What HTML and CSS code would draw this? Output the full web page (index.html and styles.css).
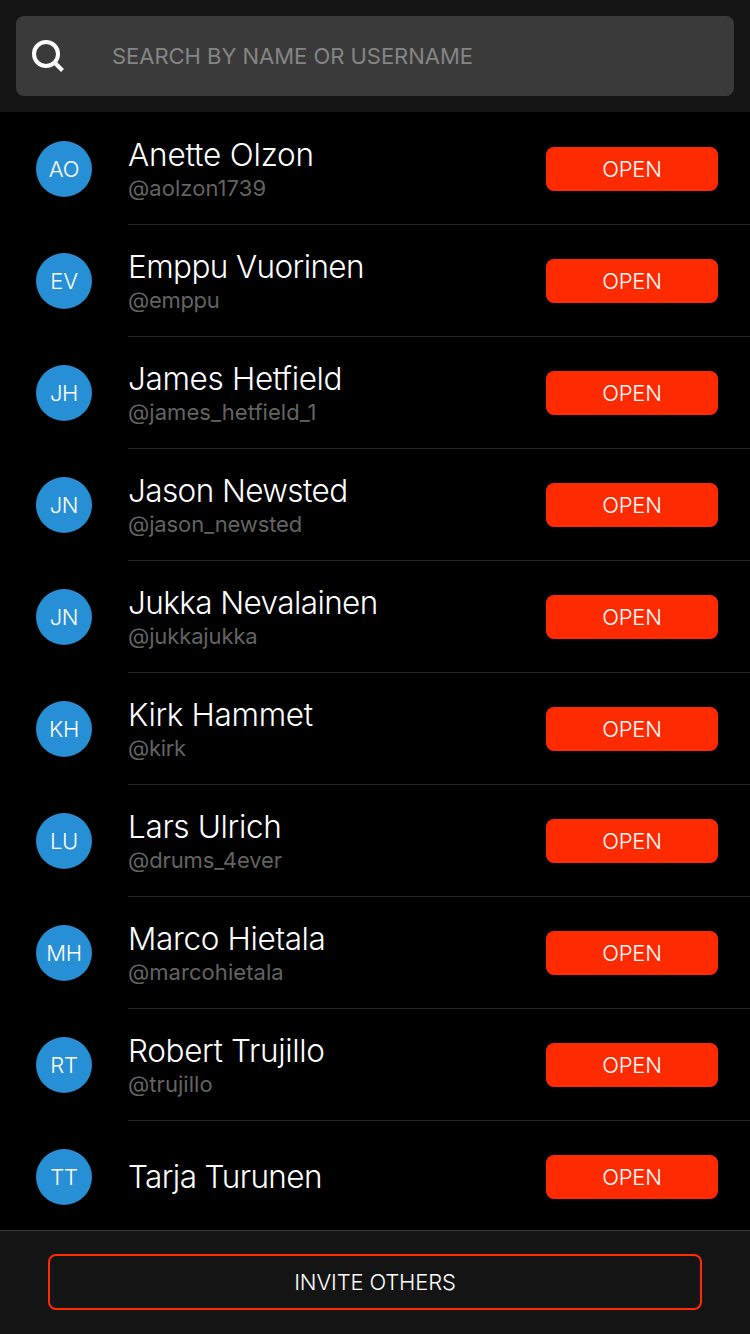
FILE: index.html
```html
<!DOCTYPE html>
<html lang="en">
<head>
<meta charset="utf-8">
<title>Contacts</title>
<link rel="stylesheet" href="styles.css">
</head>
<body>
<div class="screen">
  <header class="header">
    <div class="search">
      <svg class="search-icon" viewBox="0 0 32 32" fill="none" stroke="#fff" stroke-width="4"><circle cx="14" cy="14" r="12"/><path d="M22.5 22.5 30.5 30.5"/></svg>
      <span class="search-hint">SEARCH BY NAME OR USERNAME</span>
    </div>
  </header>
  <main class="list">
    <div class="row"><div class="avatar">AO</div><div class="body"><div class="who"><div class="name name-loose">Anette Olzon</div><div class="handle handle-loose">@aolzon1739</div></div><button class="open">OPEN</button></div></div>
    <div class="row"><div class="avatar">EV</div><div class="body"><div class="who"><div class="name name-tight">Emppu Vuorinen</div><div class="handle handle-tight">@emppu</div></div><button class="open">OPEN</button></div></div>
    <div class="row"><div class="avatar">JH</div><div class="body"><div class="who"><div class="name">James Hetfield</div><div class="handle handle-loose">@james_hetfield_1</div></div><button class="open">OPEN</button></div></div>
    <div class="row"><div class="avatar">JN</div><div class="body"><div class="who"><div class="name name-tight">Jason Newsted</div><div class="handle">@jason_newsted</div></div><button class="open">OPEN</button></div></div>
    <div class="row"><div class="avatar">JN</div><div class="body"><div class="who"><div class="name name-tight">Jukka Nevalainen</div><div class="handle">@jukkajukka</div></div><button class="open">OPEN</button></div></div>
    <div class="row"><div class="avatar">KH</div><div class="body"><div class="who"><div class="name">Kirk Hammet</div><div class="handle handle-tight">@kirk</div></div><button class="open">OPEN</button></div></div>
    <div class="row"><div class="avatar">LU</div><div class="body"><div class="who"><div class="name">Lars Ulrich</div><div class="handle">@drums_4ever</div></div><button class="open">OPEN</button></div></div>
    <div class="row"><div class="avatar">MH</div><div class="body"><div class="who"><div class="name">Marco Hietala</div><div class="handle handle-loose">@marcohietala</div></div><button class="open">OPEN</button></div></div>
    <div class="row"><div class="avatar">RT</div><div class="body"><div class="who"><div class="name">Robert Trujillo</div><div class="handle handle-loose">@trujillo</div></div><button class="open">OPEN</button></div></div>
    <div class="row"><div class="avatar">TT</div><div class="body"><div class="who"><div class="name name-tight">Tarja Turunen</div></div><button class="open">OPEN</button></div></div>
  </main>
  <footer class="footer"><button class="invite">INVITE OTHERS</button></footer>
</div>
</body>
</html>
```
FILE: styles.css
```css
* { box-sizing: border-box; }
body { margin: 0; background: #000; }
button { font: inherit; color: inherit; padding: 0; border: 0; letter-spacing: inherit; }
.screen {
  width: 750px;
  height: 1334px;
  display: flex;
  flex-direction: column;
  overflow: hidden;
  color: #fff;
  font-family: Inter, "Liberation Sans", sans-serif;
  font-weight: 300;
  font-size: 22px;
}
.header { flex: none; height: 112px; padding: 16px; background: #141414; }
.search {
  height: 80px;
  padding: 0 16px;
  display: flex;
  align-items: center;
  border-radius: 8px;
  background: #3a3a3a;
}
.search-icon { width: 32px; height: 32px; margin-right: 48px; }
.search-hint { color: #858585; font-weight: 400; font-size: 22px; letter-spacing: -0.03px; }
.list { flex: 1; min-height: 0; padding-top: 1px; overflow: hidden; }
.row { height: 112px; display: flex; padding-left: 36px; }
.avatar {
  flex: none;
  width: 56px;
  height: 56px;
  margin: 28px 36px 0 0;
  border-radius: 50%;
  background: #268fd6;
  font-size: 22px;
  letter-spacing: -0.3px;
  line-height: 56px;
  text-align: center;
}
.body {
  flex: 1;
  display: flex;
  align-items: center;
  justify-content: space-between;
  padding-right: 32px;
  padding-top: 1px;
  border-bottom: 1px solid #262626;
}
.name { font-size: 31.5px; line-height: 38px; letter-spacing: -0.35px; }
.name-loose { letter-spacing: -0.17px; }
.name-tight { letter-spacing: -0.6px; }
.handle { color: #636363; font-weight: 400; font-size: 22px; line-height: 28px; letter-spacing: -0.12px; }
.handle-loose { letter-spacing: 0.05px; }
.handle-tight { letter-spacing: -0.3px; }
.open { width: 172px; height: 44px; border-radius: 8px; background: #ff2a00; font-size: 22px; letter-spacing: -0.2px; }
.footer {
  flex: none;
  height: 104px;
  padding: 23px 48px 0;
  border-top: 1px solid #3a3a3a;
  background: #141414;
}
.invite {
  display: block;
  width: 100%;
  height: 56px;
  border: 2px solid #ff2a00;
  border-radius: 8px;
  background: transparent;
  letter-spacing: -0.15px;
}
```
